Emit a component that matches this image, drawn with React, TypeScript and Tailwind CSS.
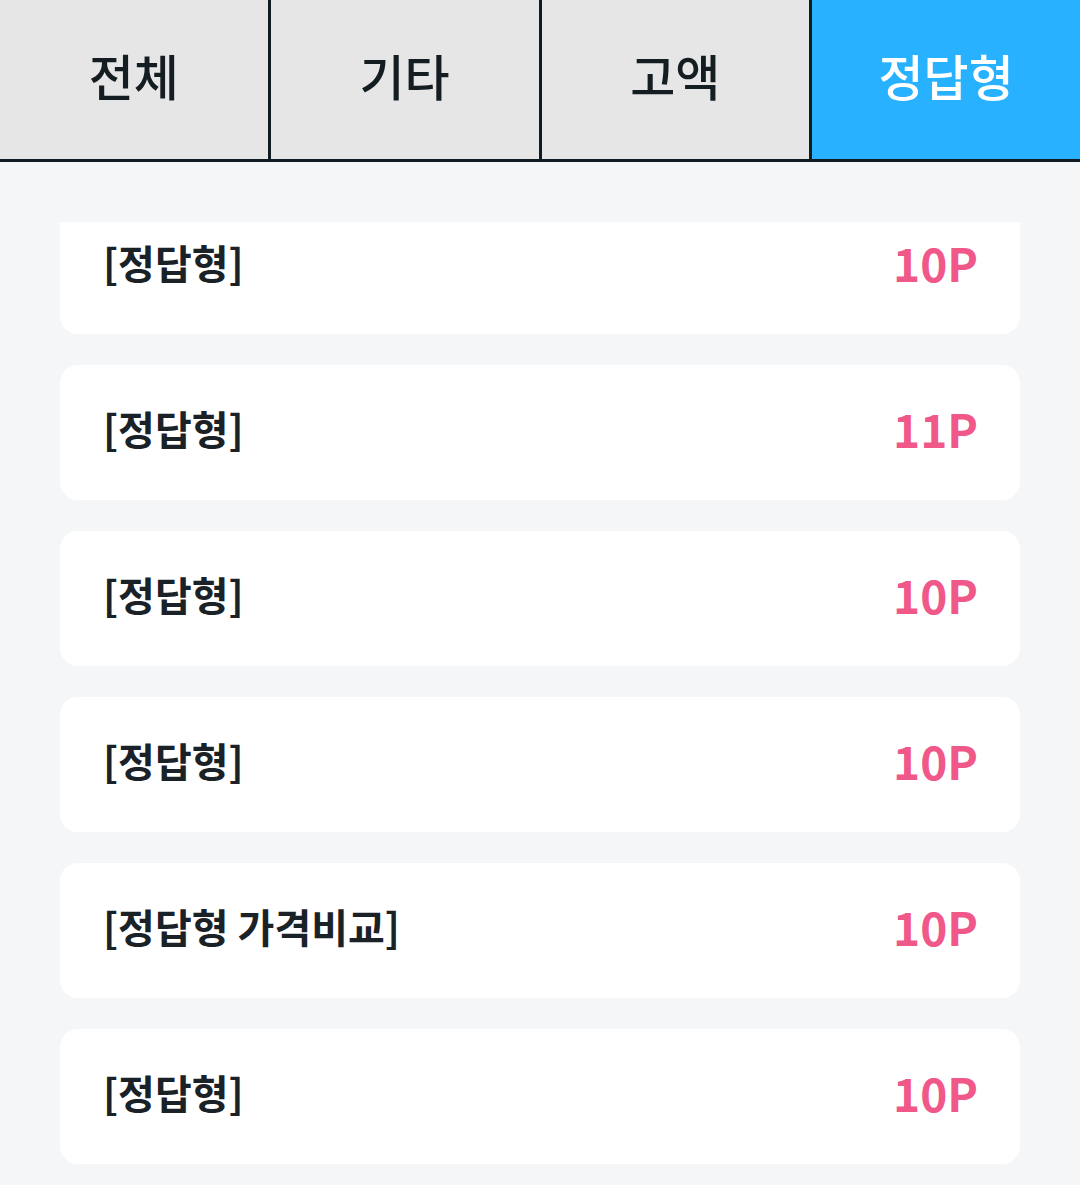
import React, { useState } from 'react';

const tabs = ['전체', '기타', '고액', '정답형'];

interface Quiz {
  id: number;
  title: string;
  point: number;
}

const quizzes: Quiz[] = [
  { id: 1, title: '[정답형]', point: 10 },
  { id: 2, title: '[정답형]', point: 11 },
  { id: 3, title: '[정답형]', point: 10 },
  { id: 4, title: '[정답형]', point: 10 },
  { id: 5, title: '[정답형 가격비교]', point: 10 },
  { id: 6, title: '[정답형]', point: 10 },
];

const App = () => {
  const [active, setActive] = useState(3);

  return (
    <div
      className="w-full h-[1185px] flex flex-col bg-[#f4f6f8] overflow-hidden"
      style={{ fontFamily: '"Noto Sans CJK KR", "Noto Sans", sans-serif' }}
    >
      {/* tab bar */}
      <div className="flex border-b-[3px] border-[#111c22] shrink-0">
        {tabs.map((t, i) => (
          <button
            key={t}
            onClick={() => setActive(i)}
            className={
              'flex-1 h-[159px] pb-[10px] flex items-center justify-center text-[49px] font-medium leading-none ' +
              (i < tabs.length - 1 ? 'border-r-[3px] border-[#111c22] ' : '') +
              (active === i ? 'bg-[#27b1fe] text-white' : 'bg-[#e6e6e6] text-[#141d22]')
            }
          >
            {t}
          </button>
        ))}
      </div>

      {/* list */}
      <div className="flex-1 pt-[60px] px-[60px] min-h-0">
        <div className="h-full overflow-hidden">
          <div className="-mt-[23px] flex flex-col gap-[31px]">
            {quizzes.map((q) => (
              <div
                key={q.id}
                className="h-[135px] shrink-0 bg-white rounded-[18px] flex items-center justify-between pl-[43px] pr-[42px] pb-[9px]"
              >
                <span className="text-[40px] font-bold text-[#1a2228] leading-none">{q.title}</span>
                <span className="text-[46px] font-semibold text-[#f0588a] leading-none">{q.point}P</span>
              </div>
            ))}
          </div>
        </div>
      </div>
    </div>
  );
};

export default App;
